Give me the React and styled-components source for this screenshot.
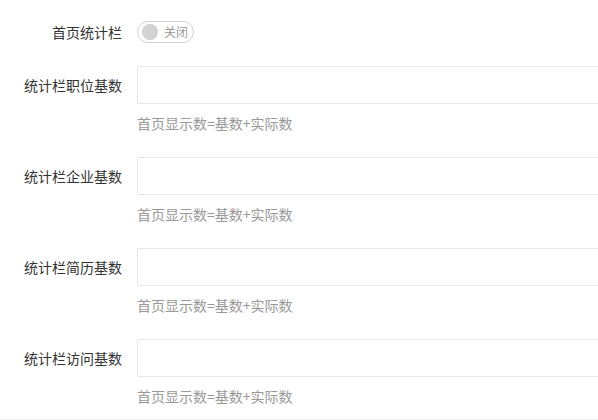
import React from "react";
import styled, { createGlobalStyle } from "styled-components";

const GlobalStyle = createGlobalStyle`
  html, body {
    margin: 0;
    padding: 0;
    background: #fff;
    overflow: hidden;
  }
  body {
    font-family: "Noto Sans CJK SC", "Microsoft YaHei", sans-serif;
    font-size: 14px;
    color: #333;
  }
`;

const Form = styled.form`
  width: 598px;
  height: 420px;
  box-sizing: border-box;
  padding-top: 13px;
  border-bottom: 1px solid #f0f0f0;
  overflow: hidden;
`;

const Item = styled.div`
  display: flex;
  align-items: flex-start;
  margin-bottom: 15px;
`;

const Label = styled.label`
  flex: none;
  width: 137px;
  box-sizing: border-box;
  padding: 9px 15px 9px 0;
  line-height: 20px;
  text-align: right;
  color: #333;
`;

const Block = styled.div`
  flex: 1;
  min-width: 0;
`;

const Switch = styled.div`
  position: relative;
  display: inline-flex;
  align-items: center;
  height: 22px;
  box-sizing: border-box;
  margin-top: 8px;
  padding: 0 5px 0 26px;
  border: 1px solid #d2d2d2;
  border-radius: 20px;
  background: #fff;
  cursor: pointer;
`;

const Knob = styled.i`
  position: absolute;
  left: 4px;
  top: 2px;
  width: 16px;
  height: 16px;
  border-radius: 50%;
  background: #d2d2d2;
`;

const SwitchText = styled.em`
  font-style: normal;
  font-size: 12px;
  line-height: 20px;
  color: #999;
`;

const Input = styled.input`
  display: block;
  width: 520px;
  height: 38px;
  box-sizing: border-box;
  padding: 0 10px;
  border: 1px solid #e6e6e6;
  border-radius: 2px;
  background: #fff;
  font: inherit;
  color: #333;
  outline: none;
`;

const Aux = styled.div`
  padding: 9px 0;
  line-height: 20px;
  font-size: 14px;
  color: #999;
`;

const fields = ["统计栏职位基数", "统计栏企业基数", "统计栏简历基数", "统计栏访问基数"];

export default function App() {
  return (
    <>
      <GlobalStyle />
      <Form>
        <Item>
          <Label>首页统计栏</Label>
          <Block>
            <Switch>
              <Knob />
              <SwitchText>关闭</SwitchText>
            </Switch>
          </Block>
        </Item>
        {fields.map((name) => (
          <Item key={name}>
            <Label>{name}</Label>
            <Block>
              <Input type="text" />
              <Aux>首页显示数=基数+实际数</Aux>
            </Block>
          </Item>
        ))}
      </Form>
    </>
  );
}
